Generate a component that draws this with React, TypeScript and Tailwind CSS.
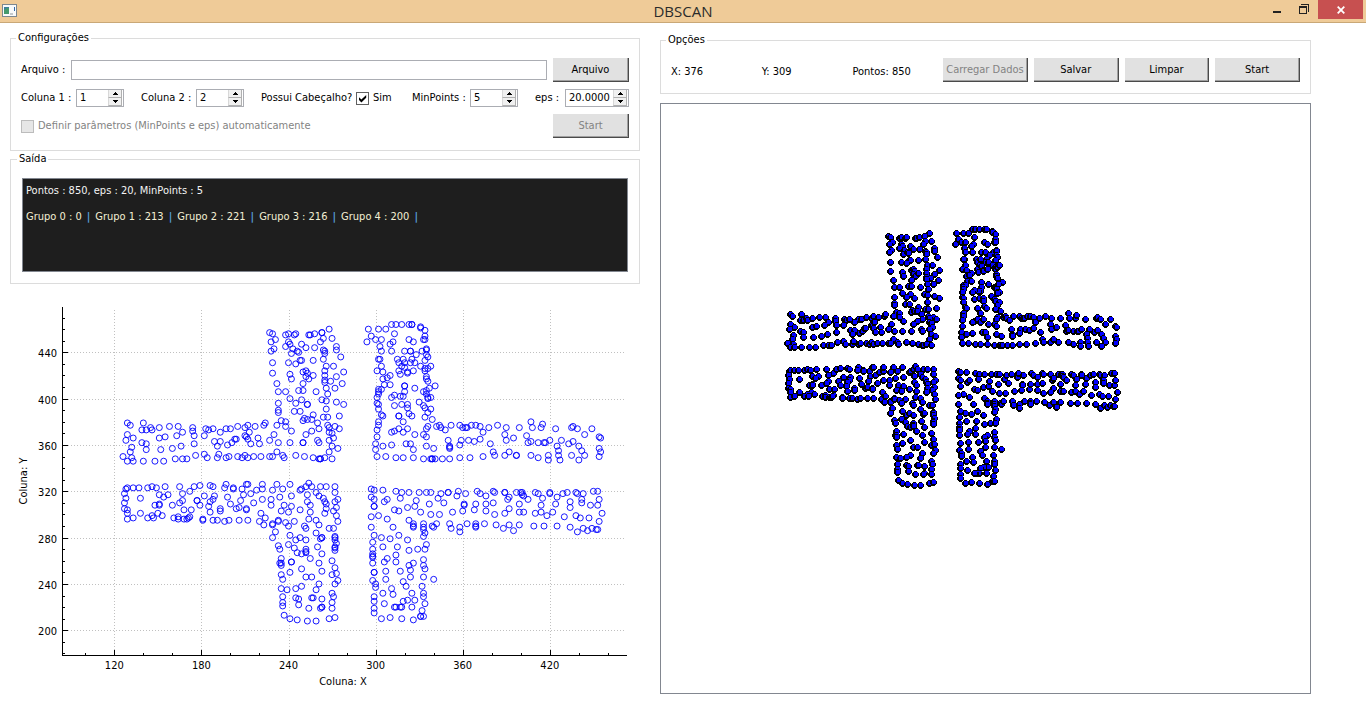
import React, { useState } from "react";

type Point = { x: number; y: number };
type Cluster = { left: number; top: number; samples: string };

/* Samples are listed per cluster, in thirds of a plot unit from the cluster's own corner. */
const CLUSTERS: Cluster[] = [
  {
    left: 60,
    top: 300,
    samples: `807,86 628,99 638,103 677,105 685,103 705,106 708,103 746,106 750,106 764,103 785,99 787,99 790,114 816,114 647,120
633,127 781,124 685,127 690,131 725,134 829,138 642,145 677,141 738,144 764,144 699,148 633,155 694,162 711,152 716,158
790,149 794,155 794,161 829,151 842,172 790,179 720,180 725,180 759,182 638,189 685,189 708,193 798,197 820,200 638,221
729,217 738,214 742,221 794,214 851,217 690,224 738,231 746,238 759,228 794,228 829,231 694,238 794,242 812,245 651,252
729,252 794,248 846,252 799,266 825,265 655,276 677,276 716,273 729,270 768,276 803,283 690,297 725,300 786,300 799,304
829,307 655,311 708,311 742,312 743,314 851,314 655,332 655,338 703,335 720,335 798,328 759,345 838,349 790,352 803,352
733,355 729,362 742,360 755,360 664,363 677,366 651,376 677,380 773,370 803,377 824,380 838,387 777,387 807,384 694,394
755,394 807,397 815,400 738,405 642,405 820,414 629,422 655,429 690,429 729,427 729,428 773,422 777,429 807,422 816,439
833,446 651,457 807,456 629,470 638,470 668,467 673,474 708,467 733,470 759,474 777,477 781,477 783,477 795,474 816,477
202,369 211,376 250,370 246,390 259,390 272,384 276,390 297,384 328,380 354,380 368,397 397,383 397,392 403,408 437,387
445,390 459,387 498,387 511,387 533,380 555,384 563,377 585,380 612,377 617,370 202,405 219,414 197,422 246,429 258,433
258,450 215,443 210,457 297,414 315,411 350,408 433,408 481,397 557,408 561,412 568,397 594,414 565,419 572,432 598,432
403,432 463,425 480,426 472,438 502,436 516,429 525,419 528,418 363,439 337,446 302,450 189,470 214,474 202,484 219,484
250,484 285,484 311,484 345,477 367,477 380,477 406,467 433,463 442,474 472,474 477,464 500,474 507,470 533,470 546,474
555,467 563,474 581,470 602,470`,
  },
  {
    left: 60,
    top: 470,
    samples: `197,57 202,54 219,54 237,54 193,72 198,85 193,99 193,117 202,121 202,130 202,148 219,144 241,130 241,85 263,54 276,50
289,54 315,50 297,74 324,75 311,81 285,105 297,103 298,105 337,105 293,130 306,137 276,137 263,144 280,144 359,50 389,65
402,50 420,46 368,72 368,92 359,99 372,120 393,120 389,141 341,144 354,142 354,147 372,148 381,148 385,144 411,92 411,93
420,105 427,148 429,150 433,78 450,46 459,50 464,78 460,87 450,96 446,109 450,127 459,150 472,150 494,155 507,150 481,117
481,122 502,81 511,102 498,43 494,54 519,54 520,56 546,57 561,43 563,43 550,75 542,92 529,116 538,111 559,117 559,119
538,150 564,150 572,72 590,61 581,99 607,57 607,43 598,155 603,130 616,144 607,89 633,89 633,105 651,43 690,43 668,57
638,61 659,81 694,78 673,105 694,110 664,123 686,127 720,120 720,61 725,58 738,50 746,39 755,50 781,50 799,50 825,50
742,75 768,67 777,77 790,84 825,67 834,89 742,96 751,105 751,127 794,96 797,103 825,96 799,117 794,130 830,112 821,123
830,137 834,154 612,165 638,161 638,163 655,152 656,155 677,157 703,154 686,168 746,148 768,150 733,168 738,175 777,165
808,175 821,175 646,186 638,203 690,196 708,210 720,203 738,210 768,189 784,203 781,206 786,204 825,199 825,204 825,210
830,220 686,224 703,234 655,228 659,238 711,248 738,238 725,252 737,243 738,249 773,231 786,252 825,229 825,234 825,242
664,266 751,266 659,279 662,281 664,286 694,275 695,276 777,279 816,272 725,297 690,307 786,304 825,293 664,314 668,328
738,321 755,321 816,314 830,310 834,331 777,342 825,342 725,349 664,356 681,359 708,356 768,359 816,369 668,380 708,383
716,387 757,383 759,384 786,387 821,380 668,398 668,407 716,404 746,414 784,412 786,411 781,414 816,397 816,414 673,435
690,446 711,450 742,453 769,453 808,446 825,442`,
  },
  {
    left: 350,
    top: 300,
    samples: `55,89 86,89 51,124 64,110 77,117 95,117 108,86 124,75 138,75 155,75 177,75 184,75 186,75 212,79 212,84 225,92 134,103
129,124 121,134 177,120 190,124 225,110 221,117 225,120 90,138 95,155 124,155 164,155 181,153 182,154 216,155 230,145
230,151 199,163 230,165 235,171 90,177 87,179 225,180 142,179 147,189 164,189 160,179 186,179 182,187 195,187 95,200
81,214 99,217 155,200 147,214 151,224 163,203 173,217 173,220 190,214 212,200 225,207 225,213 234,204 243,200 121,228
99,238 111,234 229,231 230,238 234,245 103,255 121,255 165,256 165,258 195,266 256,259 87,268 95,269 86,276 85,283 82,292
164,276 160,288 151,290 134,286 125,293 221,276 230,270 238,266 230,283 232,294 243,293 234,297 208,307 82,311 85,315
86,328 134,318 155,315 173,314 173,324 221,318 225,324 243,328 234,338 177,342 186,349 146,349 147,349 95,345 99,349
225,352 247,359 86,366 86,377 160,366 234,380 230,386 81,390 134,394 125,398 147,387 160,398 173,387 195,405 221,404
230,411 81,411 77,432 77,449 99,439 125,436 168,432 182,432 190,450 230,439 251,446 81,470 108,470 138,474 160,474
190,474 221,477 242,477 246,477 248,477 255,477 278,477 299,477 260,380 269,376 272,384 286,390 304,377 330,377 338,384
346,384 352,384 364,377 378,377 391,380 400,397 417,384 443,377 469,384 509,384 543,366 547,384 573,384 578,374 618,387
666,382 669,380 683,387 705,405 727,387 749,411 753,414 295,422 299,439 299,443 299,447 333,422 355,422 373,425 330,436
391,418 421,432 465,402 469,422 491,414 530,408 534,429 543,426 566,429 582,429 586,427 601,422 634,422 622,439 626,453
656,432 670,425 687,439 696,453 705,467 749,446 753,457 749,470 330,474 360,474 400,470 430,456 434,467 465,467 478,457
500,467 500,467 543,467 566,474 596,467 596,481 627,467 631,481 666,467 687,481`,
  },
  {
    left: 350,
    top: 470,
    samples: `64,57 73,61 99,61 64,81 73,89 73,110 73,109 103,96 113,89 86,137 64,141 113,148 64,172 130,172 138,65 156,69 177,69
151,85 134,120 147,123 173,113 195,110 199,92 177,151 190,161 190,167 190,172 208,69 229,69 243,69 212,127 238,102
243,134 269,134 221,161 221,172 221,179 225,189 221,200 246,168 251,171 261,161 264,85 273,72 282,99 295,69 296,69
299,161 304,175 308,127 321,78 326,65 347,72 343,102 343,107 338,123 330,172 330,186 351,161 373,120 377,102 378,161
378,168 378,173 382,65 391,72 408,78 408,102 408,123 404,161 430,99 434,134 430,65 434,69 439,165 463,69 465,69 474,89
478,82 478,117 465,130 460,175 478,165 491,182 500,69 513,69 515,69 517,73 519,78 509,102 509,127 522,127 509,165 535,89
557,69 565,72 578,85 574,106 557,130 574,127 591,137 609,127 552,168 583,168 600,69 600,71 618,102 622,81 622,168 638,72
652,67 678,67 681,71 701,71 661,96 661,113 696,89 696,99 722,106 731,65 744,65 744,106 749,89 757,130 749,154 644,141
678,137 691,144 718,144 661,172 683,186 701,175 713,182 726,175 740,178 743,179 73,196 95,203 121,206 147,196 173,210
229,224 203,238 225,238 177,241 142,231 99,231 68,217 68,238 68,252 68,257 69,263 69,279 113,266 103,276 138,256 138,276
221,269 221,286 225,297 190,279 177,286 182,300 182,321 151,304 108,304 108,328 73,307 73,306 68,331 77,342 77,352
160,335 169,349 221,321 251,327 217,349 125,356 130,373 99,369 73,380 73,394 73,414 73,428 103,400 186,369 221,369
221,380 225,400 195,390 173,390 160,394 186,411 155,411 152,411 138,411 134,411 216,422 95,446 121,442 156,446 190,449
212,439 213,439 221,439`,
  },
];

const X_SCALE = 1.4517;
const Y_SCALE = 1.1583;
const plotX = (x: number) => 114.3 + (x - 120) * X_SCALE;
const plotY = (y: number) => 630.3 - (y - 200) * Y_SCALE;

const POINTS: Point[] = CLUSTERS.flatMap(({ left, top, samples }) =>
  samples.split(/\s+/).map((pair) => {
    const [u, v] = pair.split(",").map(Number);
    return {
      x: Math.round(120 + (left + u / 3 - 114.3) / X_SCALE),
      y: Math.round(200 + (630.3 - top - v / 3) / Y_SCALE),
    };
  }),
);

const range = (from: number, to: number, step: number) =>
  Array.from({ length: Math.floor((to - from) / step) + 1 }, (_, i) => from + i * step);

function ScatterPlot() {
  return (
    <svg viewBox="10 284 630 410" className="block w-full text-[11px]" role="img" aria-label="Coluna X, Coluna Y">
      <g stroke="#c0c0c0" strokeDasharray="1 2" shapeRendering="crispEdges">
        {range(120, 420, 60).map((x) => (
          <line key={x} x1={Math.round(plotX(x)) + 0.5} x2={Math.round(plotX(x)) + 0.5} y1={310} y2={655} />
        ))}
        {range(200, 440, 40).map((y) => (
          <line key={y} x1={62} x2={625} y1={Math.round(plotY(y)) + 0.5} y2={Math.round(plotY(y)) + 0.5} />
        ))}
      </g>
      <g fill="none" stroke="#0000ff">
        {POINTS.map((p, i) => (
          <circle key={i} cx={plotX(p.x)} cy={plotY(p.y)} r={3} strokeWidth={0.9} />
        ))}
      </g>
      <g stroke="#000" shapeRendering="crispEdges">
        <line x1={62.5} x2={62.5} y1={307} y2={656} />
        <line x1={62} x2={627} y1={655.5} y2={655.5} />
        {range(100, 460, 20).map((x) => (
          <line
            key={x}
            x1={Math.round(plotX(x)) + 0.5}
            x2={Math.round(plotX(x)) + 0.5}
            y1={x % 60 === 0 ? 650 : 653}
            y2={655}
          />
        ))}
        {range(180, 470, 10).map((y) => (
          <line
            key={y}
            x1={63}
            x2={y % 40 === 0 ? 68 : 65}
            y1={Math.round(plotY(y)) + 0.5}
            y2={Math.round(plotY(y)) + 0.5}
          />
        ))}
      </g>
      {range(120, 420, 60).map((x) => (
        <text key={x} x={plotX(x)} y={669} textAnchor="middle">
          {x}
        </text>
      ))}
      {range(200, 440, 40).map((y) => (
        <text key={y} x={57} y={plotY(y) + 5} textAnchor="end">
          {y}
        </text>
      ))}
      <text x={343} y={685} textAnchor="middle">
        Coluna: X
      </text>
      <text transform="translate(27 481) rotate(-90)" textAnchor="middle">
        Coluna: Y
      </text>
    </svg>
  );
}

function PointCanvas() {
  return (
    <div className="mt-[9px] border border-[#828790] bg-white">
      <svg viewBox="0 0 649 589" className="block w-full" role="img" aria-label="Pontos" shapeRendering="crispEdges">
        {POINTS.map((p, i) => (
          <g key={i} transform={`translate(${p.x} ${589 - p.y})`}>
            <path d="M-1-3h3v1h1v1h1v3h-1v1h-1v1h-3v-1h-1v-1h-1v-3h1v-1h1z" fill="#000" />
            <rect x={-1} y={-2} width={4} height={4} fill="#0000ff" />
          </g>
        ))}
      </svg>
    </div>
  );
}

function PushButton({ children, disabled = false }: { children: React.ReactNode; disabled?: boolean }) {
  return (
    <button
      type="button"
      disabled={disabled}
      className="h-6 w-full border-r border-b border-[#4a4a4a] bg-[#e1e1e1] text-center whitespace-nowrap shadow-[inset_-1px_-1px_0_#a0a0a0] disabled:text-[#838383]"
    >
      {children}
    </button>
  );
}

function Spinner({ id, initial, step = 1, decimals = 0 }: { id: string; initial: number; step?: number; decimals?: number }) {
  const [value, setValue] = useState(initial.toFixed(decimals));
  const move = (by: number) => setValue((Number(value) + by).toFixed(decimals));
  return (
    <div className="flex h-[18px] min-w-0 flex-1 border border-[#abadb3] bg-white">
      <input
        id={id}
        inputMode="decimal"
        value={value}
        onChange={(e) => setValue(e.target.value)}
        className="w-0 min-w-0 flex-1 pl-[3px] outline-none"
      />
      <div className="mr-px flex w-[14px] shrink-0 flex-col">
        <button
          type="button"
          aria-label="+"
          onClick={() => move(step)}
          className="flex h-2 items-center justify-center border-r border-b border-l border-[#b0b0b0] border-l-[#d8d8d8] bg-[#f0f0f0]"
        >
          <svg viewBox="0 0 5 3" className="h-[3px] w-[5px]" shapeRendering="crispEdges">
            <path d="M2 0h1v1h1v1h1v1H0V2h1V1h1z" />
          </svg>
        </button>
        <button
          type="button"
          aria-label="-"
          onClick={() => move(-step)}
          className="flex h-2 items-center justify-center border-r border-b border-l border-[#b0b0b0] border-l-[#d8d8d8] bg-[#f0f0f0]"
        >
          <svg viewBox="0 0 5 3" className="h-[3px] w-[5px]" shapeRendering="crispEdges">
            <path d="M0 0h5v1H4v1H3v1H2V2H1V1H0z" />
          </svg>
        </button>
      </div>
    </div>
  );
}

function TitleBar() {
  return (
    <header className="grid h-[23px] grid-cols-[1fr_auto_1fr] border-b border-[#c9a877] bg-[#efcb98]">
      <svg viewBox="0 0 15 13" className="mt-1 ml-[2px] h-[13px] w-[15px]" aria-hidden="true">
        <rect width="15" height="13" fill="#7c8890" />
        <rect x="1" y="1" width="13" height="11" fill="#f8fafa" />
        <rect x="2" y="3" width="5" height="7" fill="#3c7f9c" />
        <path d="M2 10V6l3-2h2v6z" fill="#469a6c" />
        <rect x="8" y="9" width="3" height="2" fill="#c3c9cc" />
        <rect x="12" y="3" width="1" height="4" fill="#3467a5" />
      </svg>
      <h1 className="font-['Open_Sans','Noto_Sans',sans-serif] text-[15px] leading-[22px] text-[#2b2b2b]">DBSCAN</h1>
      <div className="mr-[3px] flex items-start justify-end">
        <button type="button" aria-label="Minimizar" className="flex h-[18px] w-[26px] items-center justify-center">
          <svg viewBox="0 0 8 12" className="h-3 w-2" shapeRendering="crispEdges">
            <rect y="8" width="8" height="2" fill="#222" />
          </svg>
        </button>
        <button type="button" aria-label="Restaurar" className="flex h-[18px] w-[28px] items-center justify-center">
          <svg viewBox="0 0 10 10" className="h-[10px] w-[10px]" shapeRendering="crispEdges">
            <path d="M2 0h8v8H9V1H2zM0 2h8v8H0zM1 4v5h6V4z" fill="#222" fillRule="evenodd" />
          </svg>
        </button>
        <button
          type="button"
          aria-label="Fechar"
          className="flex h-[19px] w-[45px] items-center justify-center bg-[#c75050]"
        >
          <svg viewBox="0 0 8 8" className="h-2 w-2">
            <path d="M0.7 0.7l6.6 6.6M7.3 0.7l-6.6 6.6" stroke="#fff" strokeWidth="1.8" />
          </svg>
        </button>
      </div>
    </header>
  );
}

function Settings() {
  const [header, setHeader] = useState(true);
  return (
    <fieldset className="border border-[#dcdcdc] px-[10px] pb-3">
      <legend className="-ml-[5px] px-[2px]">Configurações</legend>
      <div className="flex flex-col gap-[7px] pt-[13px]">
        <div className="flex items-center">
          <label htmlFor="file" className="w-[50px]">
            Arquivo :
          </label>
          <input id="file" className="mr-[6px] h-5 min-w-0 flex-1 border border-[#abadb3] px-1 outline-none" />
          <div className="w-[76px]">
            <PushButton>Arquivo</PushButton>
          </div>
        </div>
        <div className="grid grid-cols-[120fr_120fr_151fr_123fr_94fr] items-center whitespace-nowrap">
          <div className="flex items-center pr-[17px]">
            <label htmlFor="col1" className="w-[55px]">
              Coluna 1 :
            </label>
            <Spinner id="col1" initial={1} />
          </div>
          <div className="flex items-center pr-[17px]">
            <label htmlFor="col2" className="w-[55px]">
              Coluna 2 :
            </label>
            <Spinner id="col2" initial={2} />
          </div>
          <div className="flex items-center">
            <span className="w-[95px]">Possui Cabeçalho?</span>
            <label className="flex items-center gap-1">
              <span className="relative flex">
                <input
                  type="checkbox"
                  checked={header}
                  onChange={(e) => setHeader(e.target.checked)}
                  className="size-[13px] appearance-none border border-[#606060] bg-white"
                />
                {header && (
                  <svg viewBox="0 0 13 13" className="pointer-events-none absolute inset-0 size-[13px]">
                    <path d="M3 5.2v2.900l2.400 2.400L10.200 5.700V2.900L5.400 7.600z" fill="#000" />
                  </svg>
                )}
              </span>
              Sim
            </label>
          </div>
          <div className="flex items-center pr-[17px]">
            <label htmlFor="minpoints" className="w-[58px]">
              MinPoints :
            </label>
            <Spinner id="minpoints" initial={5} />
          </div>
          <div className="flex items-center">
            <label htmlFor="eps" className="w-[30px]">
              eps :
            </label>
            <Spinner id="eps" initial={20} decimals={4} />
          </div>
        </div>
        <div className="flex items-center justify-between">
          <label className="flex items-center gap-1 text-[#838383]">
            <input type="checkbox" disabled className="size-[13px] appearance-none border border-[#bcbcbc] bg-[#e6e6e6]" />
            Definir parâmetros (MinPoints e eps) automaticamente
          </label>
          <div className="w-[76px]">
            <PushButton disabled>Start</PushButton>
          </div>
        </div>
      </div>
    </fieldset>
  );
}

const GROUPS = [0, 213, 221, 216, 200];

function Output() {
  return (
    <fieldset className="mt-px border border-[#dcdcdc] px-[11px] pb-[11px]">
      <legend className="-ml-[5px] px-[2px]">Saída</legend>
      <div className="mt-3 h-[94px] overflow-auto border border-[#828790] bg-[#1e1e1e] px-[3px] py-[5px] leading-[13px] text-[#f4f4f4]">
        <p>Pontos : 850, eps : 20, MinPoints : 5</p>
        <p className="mt-[13px] flex flex-wrap gap-[5px] text-[#f3efd4]">
          {GROUPS.map((count, i) => (
            <React.Fragment key={i}>
              <span>{`Grupo ${i} : ${count}`}</span>
              <span className="font-bold text-[#569cd6]">|</span>
            </React.Fragment>
          ))}
        </p>
      </div>
    </fieldset>
  );
}

function Options() {
  return (
    <fieldset className="border border-[#dcdcdc] px-[10px] pb-[11px]">
      <legend className="-ml-[5px] px-[2px]">Opções</legend>
      <div className="grid grid-cols-7 items-center gap-[6px] pt-[11px]">
        <span className="pt-1">X: 376</span>
        <span className="pt-1">Y: 309</span>
        <span className="pt-1">Pontos: 850</span>
        <PushButton disabled>Carregar Dados</PushButton>
        <PushButton>Salvar</PushButton>
        <PushButton>Limpar</PushButton>
        <PushButton>Start</PushButton>
      </div>
    </fieldset>
  );
}

export default function App() {
  return (
    <div className="min-h-screen bg-white font-['DejaVu_Sans_Condensed','Noto_Sans',sans-serif] text-[11px] leading-[14px] text-black">
      <TitleBar />
      <main className="grid grid-cols-[630fr_651fr] gap-5 pt-2 pr-[55px] pl-[10px]">
        <div className="min-w-0">
          <Settings />
          <Output />
          <ScatterPlot />
        </div>
        <div className="min-w-0 pt-[2px]">
          <Options />
          <PointCanvas />
        </div>
      </main>
    </div>
  );
}
